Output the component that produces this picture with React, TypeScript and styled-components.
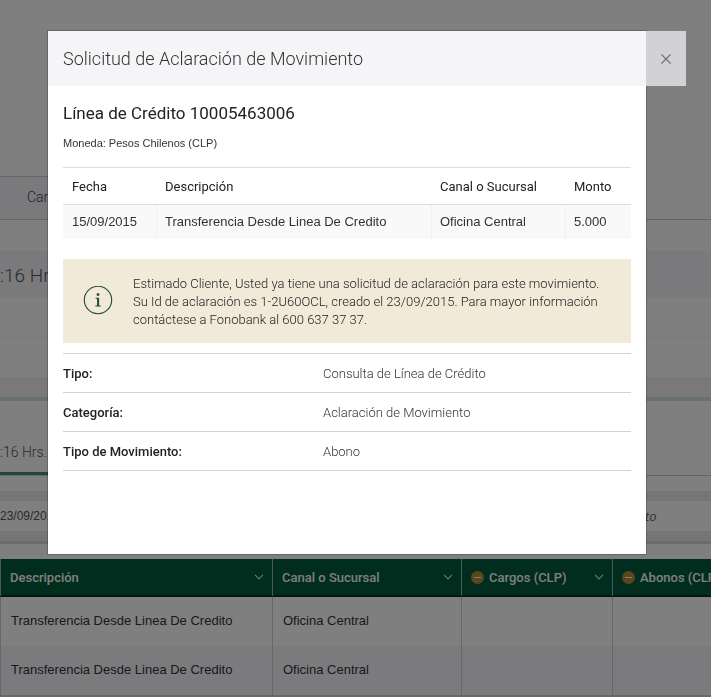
import React from "react";
import styled, { createGlobalStyle } from "styled-components";

const GlobalStyle = createGlobalStyle`
  *, *::before, *::after { box-sizing: border-box; }
  body {
    margin: 0;
    background: #fff;
    color: #333;
    font-family: Roboto, "Liberation Sans", sans-serif;
    overflow: hidden;
  }
  h1, h2, p, dl, dd, dt { margin: 0; }
`;

const Page = styled.main`
  display: flex;
  flex-direction: column;
  padding-top: 176px;
`;

const TabBar = styled.nav`
  display: flex;
  height: 44px;
  border-bottom: 1px solid #cacaca;
`;

const Tab = styled.a`
  width: 200px;
  padding-left: 27px;
  border-top: 1px solid #cacaca;
  background: #f5f5f9;
  color: #444;
  font-size: 14px;
  font-weight: 300;
  line-height: 41px;
  text-decoration: none;
`;

const Band = styled.div<{ $height: number; $color?: string; $line?: string }>`
  height: ${(p) => p.$height}px;
  background: ${(p) => p.$color ?? "#fff"};
  border-bottom: ${(p) => (p.$line ? `1px solid ${p.$line}` : "0")};
`;

const SectionTime = styled.h2`
  height: 47px;
  background: #f5f5f9;
  color: #555;
  font-size: 19px;
  font-weight: 300;
  line-height: 49px;
`;

const SubTabs = styled.nav`
  display: flex;
  height: 75px;
  border-bottom: 1px solid #cacaca;
`;

const SubTab = styled.a`
  width: 200px;
  height: 74px;
  padding-top: 28px;
  border-bottom: 3px solid #4d8a78;
  color: #555;
  font-size: 14px;
  font-weight: 300;
  line-height: 46px;
  text-decoration: none;
`;

const Filters = styled.div`
  display: flex;
  height: 30px;
`;

const DateInput = styled.input`
  flex: 1;
  min-width: 0;
  padding: 0;
  border: 0;
  color: #555;
  font: 12px "Liberation Sans", sans-serif;
`;

const SearchInput = styled.input`
  width: 66px;
  padding: 0;
  border: 0;
  font: italic 13px "Open Sans", sans-serif;
  &::placeholder { color: #666; opacity: 1; }
`;

const Movements = styled.table`
  width: 100%;
  min-width: 763px;
  border-collapse: separate;
  border-spacing: 0;
  table-layout: fixed;
  border-bottom: 2px solid #d0d0d4;
`;

const MoveHead = styled.th<{ $width: number }>`
  width: ${(p) => p.$width}px;
  height: 38px;
  padding: 0 8px 0 9px;
  background: #005a3a;
  border-left: 1px solid #8ab8ae;
  border-bottom: 2px solid #003020;
  color: #fff;
  font-size: 13px;
  font-weight: 500;
  text-align: left;
`;

const HeadContent = styled.div`
  display: flex;
  align-items: center;
  gap: 5px;
  svg:last-child { margin-left: auto; }
`;

const MoveCell = styled.td<{ $shade?: boolean }>`
  height: 49px;
  padding: 0 10px 2px;
  border-left: 1px solid #d0d0d4;
  background: ${(p) => (p.$shade ? "#f7f7fb" : "#fff")};
  color: #333;
  font: 13px "Liberation Sans", sans-serif;
`;

const Scrim = styled.div`
  position: fixed;
  inset: 0;
  display: flex;
  align-items: flex-start;
  padding: 31px 25px 0 48px;
  background: rgba(0, 0, 0, 0.5);
`;

const Dialog = styled.section`
  flex: 1;
  min-width: 0;
  background: #fff;
  box-shadow: 0 0 0 1px rgba(0, 0, 0, 0.2);
`;

const DialogHeader = styled.header`
  padding: 0 15px;
  background: #f5f5f7;
`;

const DialogTitle = styled.h1`
  color: #333;
  font-size: 18px;
  font-weight: 300;
  line-height: 55px;
`;

const CloseButton = styled.button`
  position: relative;
  display: grid;
  place-items: center;
  width: 40px;
  height: 55px;
  padding: 0;
  border: 0;
  background: #d2d2d4;
`;

const DialogBody = styled.div`
  padding: 15px 15px 83px;
`;

const Account = styled.h2`
  color: #222;
  font-size: 17px;
  font-weight: 400;
  line-height: 24px;
`;

const Currency = styled.p`
  margin-top: 10px;
  font: 11px/16px "Liberation Sans", sans-serif;
`;

const Detail = styled.table`
  width: 100%;
  margin-top: 16px;
  border-collapse: separate;
  border-spacing: 0;
  table-layout: fixed;
`;

const DetailHead = styled.th<{ $width?: number }>`
  width: ${(p) => (p.$width ? `${p.$width}px` : "auto")};
  height: 38px;
  padding: 0 0 0 9px;
  border-top: 1px solid #ddd;
  border-bottom: 1px solid #ddd;
  color: #222;
  font-size: 13px;
  font-weight: 400;
  text-align: left;
`;

const DetailCell = styled.td`
  height: 34px;
  padding: 0 0 2px 8px;
  border-left: 1px solid #eef0f3;
  background: #f9f9fa;
  font: 13px "Liberation Sans", sans-serif;
  &:first-child { border-left-color: #f9f9fa; }
`;

const Notice = styled.div`
  display: flex;
  align-items: center;
  gap: 20px;
  margin: 20px 0 10px;
  padding: 14px 20px;
  background: #f1ead8;
  svg { flex: none; }
`;

const NoticeText = styled.p`
  padding-top: 2px;
  color: #222;
  font-size: 13px;
  font-weight: 300;
  line-height: 18px;
`;

const Facts = styled.dl`
  border-top: 1px solid #d2d2d2;
`;

const Fact = styled.div`
  display: flex;
  height: 39px;
  border-bottom: 1px solid #d2d2d2;
  font-size: 13px;
  line-height: 40px;
`;

const FactName = styled.dt`
  width: 260px;
  color: #222;
  font-weight: 500;
`;

const FactValue = styled.dd`
  color: #333;
  font-weight: 300;
`;

const Chevron = () => (
  <svg width="10" height="6" viewBox="0 0 10 6" fill="none" stroke="#d8e6e0" strokeWidth="1.2" aria-hidden="true">
    <path d="M1 .8 5 4.9 9 .8" />
  </svg>
);

const Minus = () => (
  <svg width="13" height="13" viewBox="0 0 13 13" aria-hidden="true">
    <circle cx="6.5" cy="6.5" r="6.5" fill="#b58a3a" />
    <path d="M3 6.5h7" stroke="#fff" strokeWidth="1" />
  </svg>
);

const Info = () => (
  <svg width="30" height="30" viewBox="0 0 30 30" aria-hidden="true">
    <circle cx="15" cy="14" r="13.7" fill="none" stroke="#1d4a38" strokeWidth="1.1" />
    <circle cx="15" cy="8.6" r="1.4" fill="#1d4a38" />
    <path d="M12.6 11.7h3.5v7.8h1.6v1.1h-5.3v-1.1h1.7v-6.7h-1.5z" fill="#1d4a38" />
  </svg>
);

const columns = [
  { name: "Descripción", width: 272 },
  { name: "Canal o Sucursal", width: 189 },
  { name: "Cargos (CLP)", width: 151, minus: true },
  { name: "Abonos (CLP)", width: 151, minus: true },
];

const facts = [
  ["Tipo:", "Consulta de Línea de Crédito"],
  ["Categoría:", "Aclaración de Movimiento"],
  ["Tipo de Movimiento:", "Abono"],
];

export default function App() {
  return (
    <>
      <GlobalStyle />
      <Page>
        <TabBar>
          <Tab href="#cartola">Cartola</Tab>
        </TabBar>
        <Band $height={31} />
        <SectionTime>:16 Hrs.</SectionTime>
        <Band $height={40} $line="#f2f2f2" />
        <Band $height={39} />
        <Band $height={20} $color="#f3f3f7" />
        <Band $height={4} $color="#d3e3de" />
        <SubTabs>
          <SubTab href="#movimientos">:16 Hrs.</SubTab>
        </SubTabs>
        <Band $height={15} />
        <Band $height={10} $color="#eaeaee" />
        <Filters>
          <DateInput aria-label="Fecha" defaultValue="23/09/2015" />
          <SearchInput aria-label="Filtro" placeholder="to" />
        </Filters>
        <Band $height={10} $color="#eaeaee" />
        <Band $height={3} $color="#d6d6da" />
        <Band $height={15} />
        <Movements>
          <thead>
            <tr>
              {columns.map((c) => (
                <MoveHead key={c.name} $width={c.width}>
                  <HeadContent>
                    {c.minus && <Minus />}
                    {c.name}
                    <Chevron />
                  </HeadContent>
                </MoveHead>
              ))}
            </tr>
          </thead>
          <tbody>
            {[false, true].map((shade) => (
              <tr key={String(shade)}>
                <MoveCell $shade={shade}>Transferencia Desde Linea De Credito</MoveCell>
                <MoveCell $shade={shade}>Oficina Central</MoveCell>
                <MoveCell $shade={shade} />
                <MoveCell $shade={shade} />
              </tr>
            ))}
          </tbody>
        </Movements>
      </Page>

      <Scrim>
        <Dialog role="dialog" aria-modal="true" aria-labelledby="dialog-title">
          <DialogHeader>
            <DialogTitle id="dialog-title">Solicitud de Aclaración de Movimiento</DialogTitle>
          </DialogHeader>
          <DialogBody>
            <Account>Línea de Crédito 10005463006</Account>
            <Currency>Moneda: Pesos Chilenos (CLP)</Currency>
            <Detail>
              <thead>
                <tr>
                  <DetailHead $width={93}>Fecha</DetailHead>
                  <DetailHead>Descripción</DetailHead>
                  <DetailHead $width={134}>Canal o Sucursal</DetailHead>
                  <DetailHead $width={66}>Monto</DetailHead>
                </tr>
              </thead>
              <tbody>
                <tr>
                  <DetailCell>15/09/2015</DetailCell>
                  <DetailCell>Transferencia Desde Linea De Credito</DetailCell>
                  <DetailCell>Oficina Central</DetailCell>
                  <DetailCell>5.000</DetailCell>
                </tr>
              </tbody>
            </Detail>
            <Notice>
              <Info />
              <NoticeText>
                Estimado Cliente, Usted ya tiene una solicitud de aclaración para este movimiento. Su Id de
                aclaración es 1-2U60OCL, creado el 23/09/2015. Para mayor información contáctese a Fonobank al
                600 637 37 37.
              </NoticeText>
            </Notice>
            <Facts>
              {facts.map(([name, value]) => (
                <Fact key={name}>
                  <FactName>{name}</FactName>
                  <FactValue>{value}</FactValue>
                </Fact>
              ))}
            </Facts>
          </DialogBody>
        </Dialog>
        <CloseButton type="button" aria-label="Cerrar">
          <svg width="10" height="10" viewBox="0 0 10 10" stroke="#5f6a66" strokeWidth="1.1" aria-hidden="true">
            <path d="M.4.4l9.2 9.2M9.6.4.4 9.6" />
          </svg>
        </CloseButton>
      </Scrim>
    </>
  );
}
